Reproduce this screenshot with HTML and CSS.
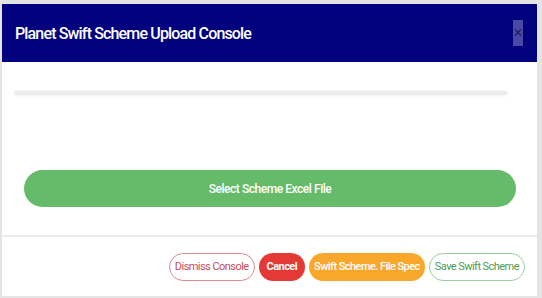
FILE: index.html
```html
<!DOCTYPE html>
<html lang="en">
<head>
  <meta charset="UTF-8" />
  <title>Planet Swift Scheme Upload Console</title>
  <link rel="stylesheet" href="styles.css">
</head>
<body>
  <div class="modal">
    <!-- header -->
    <div class="modal-header">
      <h4 class="modal-title">Planet Swift Scheme Upload Console</h4>
      <button class="close-btn">&times;</button>
    </div>

    <!-- body -->
    <div class="modal-body">
      <div class="progress-bar"></div>
      <button class="select-btn">Select Scheme Excel File</button>
    </div>

    <!-- footer -->
    <div class="modal-footer">
      <button class="btn btn-dismiss">Dismiss Console</button>
      <button class="btn btn-cancel">Cancel</button>
      <button class="btn btn-spec">Swift Scheme. File Spec</button>
      <button class="btn btn-save">Save Swift Scheme</button>
    </div>
  </div>
</body>
</html>
```

FILE: styles.css
```css
html, body {
  margin: 0;
  height: 100%;
}
body {
  font-family: Roboto, "Liberation Sans", sans-serif;
  background: #e4e4e4;
  padding: 4px 5px 2px 2px;
  box-sizing: border-box;
}
.modal {
  background: #fff;
  height: 100%;
  display: flex;
  flex-direction: column;
}
.modal-header {
  background: #02027e;
  height: 58px;
  display: flex;
  align-items: center;
  justify-content: space-between;
  padding: 0 14px 0 13px;
}
.modal-title {
  margin: 0;
  color: #fff;
  font-size: 16px;
  font-weight: 500;
  letter-spacing: -0.85px;
}
.close-btn {
  width: 10px;
  height: 26px;
  padding: 0;
  border: none;
  background: #4a4aa6;
  color: #1a1a5a;
  font-size: 16px;
  line-height: 26px;
  cursor: pointer;
}
.modal-body {
  flex: 1;
  padding: 29px 0 0 0;
  border-bottom: 2px solid #ececec;
}
.progress-bar {
  height: 3px;
  margin: 0 30px 0 13px;
  background: #ececec;
  box-shadow: 0 1px 3px rgba(0,0,0,0.12);
}
.select-btn {
  display: block;
  width: 492px;
  height: 37px;
  margin: 76px 0 0 22px;
  border: none;
  border-radius: 19px;
  background: #66bb6a;
  color: #fff;
  font-family: Roboto, "Liberation Sans", sans-serif;
  font-size: 12px;
  font-weight: 500;
  letter-spacing: -0.45px;
  cursor: pointer;
}
.modal-footer {
  height: 59px;
  display: flex;
  align-items: center;
  justify-content: flex-end;
  gap: 4px;
  padding-right: 12px;
}
.btn {
  height: 28px;
  padding: 0 5px;
  border-radius: 14px;
  font-family: Roboto, "Liberation Sans", sans-serif;
  font-size: 11px;
  letter-spacing: -0.55px;
  cursor: pointer;
  background: #fff;
}
.btn-dismiss {
  border: 1.5px solid #d98a90;
  color: #c0505a;
}
.btn-cancel {
  border: none;
  padding: 0 8px;
  background: #e53935;
  color: #fff;
  font-weight: 700;
}
.btn-spec {
  border: none;
  background: #f9a72b;
  color: #fff;
  font-weight: 500;
}
.btn-save {
  border: 1.5px solid #9ccc9e;
  color: #4e9a55;
}
```
